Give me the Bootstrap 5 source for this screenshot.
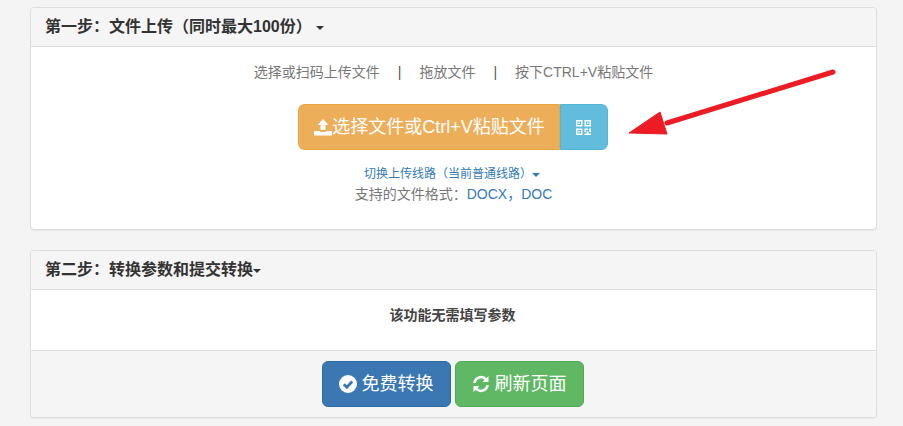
<!DOCTYPE html>
<html lang="zh"><head><meta charset="utf-8"><title>文件上传</title>
<link href="https://cdn.jsdelivr.net/npm/bootstrap@5.3.0/dist/css/bootstrap.min.css" rel="stylesheet">
<style>
html,body{height:426px;overflow:hidden}
body{background:#f4f4f4;font-family:"Liberation Sans","Noto Sans CJK SC",sans-serif;font-size:14px;line-height:1.42857;color:#333}
.wrap{padding:7px 26px 0 30px}
.pane{background:#fff;border:1px solid #ddd;border-radius:4px;box-shadow:0 1px 1px rgba(0,0,0,.05);overflow:hidden;position:relative}
.pane+.pane{margin-top:20px}
.pane-head{height:39px;background:#f5f5f5;border-bottom:1px solid #ddd;padding:0 14px;font-size:16px;font-weight:700;line-height:38px;color:#333}
.caret-d{display:inline-block;width:0;height:0;border-top:4px solid currentColor;border-left:4px solid transparent;border-right:4px solid transparent;vertical-align:middle}
.caret-far{margin-left:4px}
.body-one{height:182px;padding-top:16px}
.hints{color:#777;height:41px;line-height:18px}
.hints span.sep{margin:0 18px;color:#555}
.upwrap{padding-right:2px}
.upbtn{height:46px;border-radius:6px;overflow:hidden;font-size:18px;line-height:44px;color:#fff}
.upbtn .main{width:262px;background:#edae5a;border:1px solid #eaa640;border-radius:6px 0 0 6px;display:flex;align-items:center;justify-content:center;padding-left:2px}
.upbtn .qr{width:48px;background:#62bddc;border:1px solid #4fb6d8;border-radius:0 6px 6px 0;display:flex;align-items:center;justify-content:center}
.switchline{margin-top:15px;font-size:12px;line-height:18px;color:#337ab7;padding-right:3px}
.fmt{line-height:22px;color:#777}
.fmt b{font-weight:400;color:#337ab7}
.body-two{height:60px;font-weight:700;color:#444;line-height:50px;padding-right:2px}
.pane-foot{height:67px;background:#f5f5f5;border-top:1px solid #ddd;padding:10px 2px 0 0}
.act{width:129px;height:46px;border-radius:6px;color:#fff;font-size:18px;display:flex;align-items:center;justify-content:center;gap:5px;padding:0}
.act.b1,.act.b1:hover{background:#3a77b3;border:1px solid #2e6da4;color:#fff}
.act.b2,.act.b2:hover{background:#60b865;border:1px solid #4cae4c;color:#fff}
.arrowbox{position:absolute;left:596px;top:55px;pointer-events:none}
</style></head>
<body>
<div class="wrap">
  <div class="pane">
    <div class="pane-head">第一步：文件上传（同时最大100份）<span class="caret-d caret-far"></span></div>
    <div class="body-one text-center">
      <div class="hints">选择或扫码上传文件<span class="sep">|</span>拖放文件<span class="sep">|</span>按下CTRL+V粘贴文件</div>
      <div class="d-flex justify-content-center upwrap"><div class="upbtn d-flex">
        <div class="main"><svg width="18" height="17" viewBox="0 0 18 17" fill="#fff"><path d="M9 0 14.500 6H11.500V11H6.500V6H3.500ZM0 12H6V13H12V12H18V16.500H0Z"/></svg><span>选择文件或Ctrl+V粘贴文件</span></div>
        <div class="qr"><svg width="15" height="15" viewBox="0 0 15 15" fill="#fff"><path fill-rule="evenodd" d="M0 0h6.500v6.500H0zM1.500 1.500v3.500h3.500V1.500zM8.500 0H15v6.500H8.500zM10 1.500v3.500h3.500V1.500zM0 8.500h6.500V15H0zM1.500 10v3.500h3.500V10z"/><path d="M2.500 2.500H4V4H2.500zM11 2.500h1.500V4H11zM2.500 11H4v1.500H2.500zM8.500 8.500H12V10H10v2H8.500zM13 8.500h2V12h-2zM10.500 11.500h2v2H15V15H8.500v-1.500h2z"/></svg></div>
      </div></div>
      <div class="switchline">切换上传线路（当前普通线路）<span class="caret-d"></span></div>
      <div class="fmt">支持的文件格式：<b>DOCX，DOC</b></div>
    </div>
    <svg class="arrowbox" width="220" height="90" viewBox="0 0 220 90"><path d="M206 9 40 60" stroke="#ed1c24" stroke-width="5" stroke-linecap="round" fill="none"/><path d="M2 70 33 49 40 71Z" fill="#ed1c24" stroke="#ed1c24" stroke-linejoin="round"/></svg>
  </div>
  <div class="pane">
    <div class="pane-head">第二步：转换参数和提交转换<span class="caret-d"></span></div>
    <div class="body-two text-center">该功能无需填写参数</div>
    <div class="pane-foot d-flex justify-content-center gap-1">
      <button type="button" class="btn act b1"><svg width="18" height="18" viewBox="0 0 18 18"><circle cx="9" cy="9" r="9" fill="#fff"/><path d="M4.800 9.200 7.800 12.200 13.200 6.500" fill="none" stroke="#3a77b3" stroke-width="2.800"/></svg>免费转换</button>
      <button type="button" class="btn act b2"><svg width="18" height="18" viewBox="0 0 18 18" fill="none" stroke="#fff" stroke-width="2.600"><path d="M2.500 8A6.500 6.500 0 0 1 14 4.500M15.500 10A6.500 6.500 0 0 1 4 13.500"/><path d="M16.500 1v6h-6z M1.500 17v-6h6z" fill="#fff" stroke="none"/></svg>刷新页面</button>
    </div>
  </div>
</div>
<script src="https://cdn.jsdelivr.net/npm/bootstrap@5.3.0/dist/js/bootstrap.bundle.min.js"></script>
</body></html>
